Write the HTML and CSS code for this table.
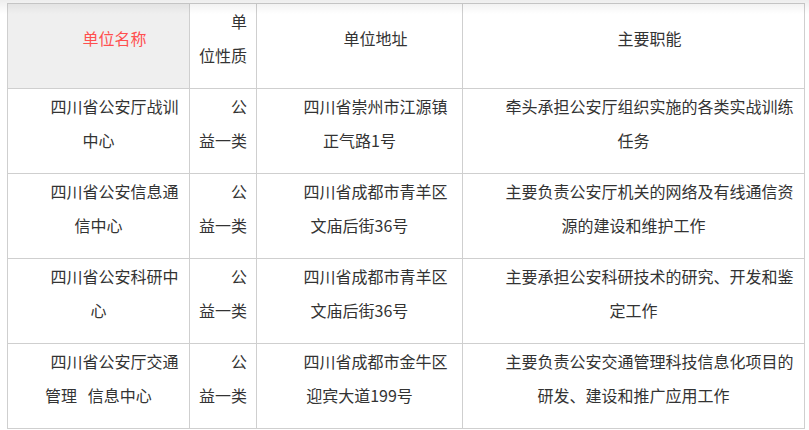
FILE: index.html
```html
<!DOCTYPE html>
<html lang="zh-CN">
<head>
<meta charset="utf-8">
<title>单位职能</title>
<link rel="stylesheet" href="styles.css">
</head>
<body>
<div class="page">
  <div class="top-shadow"></div>
  <table class="units">
    <colgroup>
      <col class="c-name">
      <col class="c-type">
      <col class="c-addr">
      <col class="c-duty">
    </colgroup>
    <thead>
      <tr>
        <th class="head-name"><p>单位名称</p></th>
        <th><p>单位性质</p></th>
        <th><p>单位地址</p></th>
        <th><p>主要职能</p></th>
      </tr>
    </thead>
    <tbody>
      <tr>
        <td><p>四川省公安厅战训中心</p></td>
        <td><p>公益一类</p></td>
        <td><p>四川省崇州市江源镇正气路1号</p></td>
        <td><p>牵头承担公安厅组织实施的各类实战训练任务</p></td>
      </tr>
      <tr>
        <td><p>四川省公安信息通信中心</p></td>
        <td><p>公益一类</p></td>
        <td><p>四川省成都市青羊区文庙后街36号</p></td>
        <td><p>主要负责公安厅机关的网络及有线通信资源的建设和维护工作</p></td>
      </tr>
      <tr>
        <td><p>四川省公安科研中心</p></td>
        <td><p>公益一类</p></td>
        <td><p>四川省成都市青羊区文庙后街36号</p></td>
        <td><p>主要承担公安科研技术的研究、开发和鉴定工作</p></td>
      </tr>
      <tr>
        <td><p>四川省公安厅交通管理&nbsp;&nbsp;&nbsp;信息中心</p></td>
        <td><p>公益一类</p></td>
        <td><p>四川省成都市金牛区迎宾大道199号</p></td>
        <td><p>主要负责公安交通管理科技信息化项目的研发、建设和推广应用工作</p></td>
      </tr>
    </tbody>
  </table>
</div>
</body>
</html>
```
FILE: styles.css
```css
html, body {
  margin: 0;
  padding: 0;
  background: #fff;
}
body {
  font-family: "Noto Sans CJK SC", "Liberation Sans", sans-serif;
  font-size: 16px;
  color: #333;
}
.page {
  position: relative;
  width: 809px;
  height: 430px;
  overflow: hidden;
}
.top-shadow {
  position: absolute;
  left: 0;
  top: 0;
  width: 809px;
  height: 14px;
  background: linear-gradient(to bottom, rgba(0,0,0,0.07), rgba(0,0,0,0));
  pointer-events: none;
}
.units {
  margin: 3px 0 0 7px;
  width: 797px;
  border-collapse: collapse;
  table-layout: fixed;
}
.c-name { width: 182px; }
.c-type { width: 67px; }
.c-addr { width: 206px; }
.c-duty { width: 342px; }
.units th,
.units td {
  border: 1px solid #cfcfcf;
  padding: 0 8px 16px;
  vertical-align: middle;
  text-align: center;
  font-weight: normal;
  line-height: 34px;
}
.units th {
  background: #fff;
}
.units th.head-name {
  background: #efefef;
  color: #ff4f4f;
}
.units p {
  margin: 0;
  text-indent: 2em;
}
```
